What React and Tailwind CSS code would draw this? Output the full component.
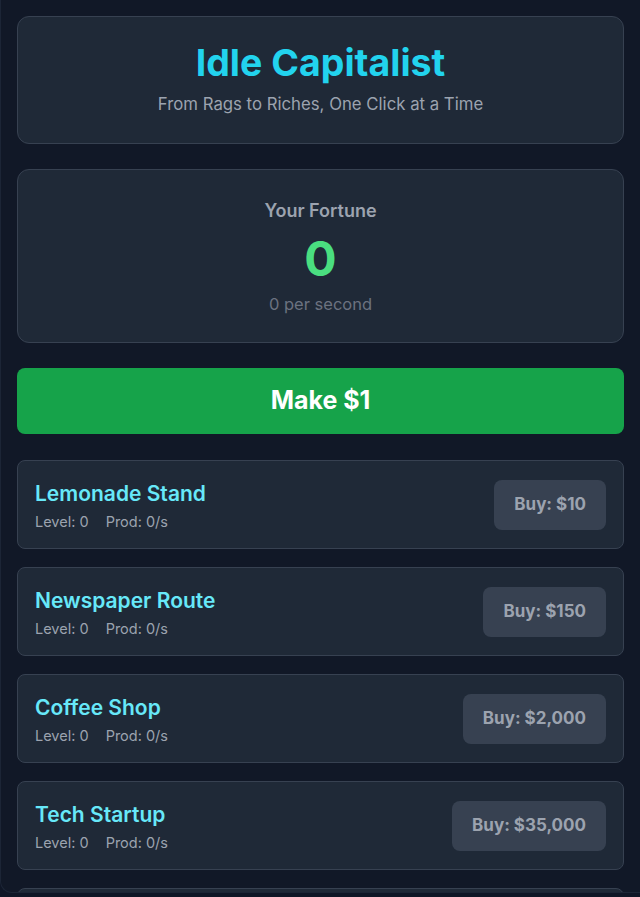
import React, { useState, useEffect } from "react";

const BUSINESSES = [
  { name: "Lemonade Stand", cost: 10, prod: 1 },
  { name: "Newspaper Route", cost: 150, prod: 8 },
  { name: "Coffee Shop", cost: 2000, prod: 60 },
  { name: "Tech Startup", cost: 35000, prod: 500 },
  { name: "Real Estate Empire", cost: 500000, prod: 4000 },
];

const fmt = (n) => Math.floor(n).toLocaleString("en-US");

function Business({ biz, level, money, onBuy }) {
  const cost = Math.floor(biz.cost * Math.pow(1.15, level));
  const canBuy = money >= cost;
  return (
    <div className="flex h-[89px] shrink-0 items-center justify-between rounded-lg border border-[#374151] bg-[#1f2937] px-[17px]">
      <div className="pt-[3px]">
        <h3 className="text-[21px] font-semibold leading-7 text-[#67e8f9]">{biz.name}</h3>
        <div className="mt-[4px] flex gap-[17px] text-[14.5px] leading-5 text-[#9ca3af]">
          <span>Level: {level}</span>
          <span>Prod: {fmt(level * biz.prod)}/s</span>
        </div>
      </div>
      <button
        onClick={onBuy}
        disabled={!canBuy}
        className={
          canBuy
            ? "h-[50px] rounded-lg bg-[#0891b2] px-5 text-[17px] font-bold text-white"
            : "h-[50px] cursor-not-allowed rounded-lg bg-[#374151] px-5 text-[17px] font-bold text-[#9ca3af]"
        }
      >
        Buy: ${fmt(cost)}
      </button>
    </div>
  );
}

export default function App() {
  const [money, setMoney] = useState(0);
  const [levels, setLevels] = useState(BUSINESSES.map(() => 0));

  const perSecond = BUSINESSES.reduce((sum, b, i) => sum + b.prod * levels[i], 0);

  useEffect(() => {
    if (perSecond === 0) return;
    const id = setInterval(() => setMoney((m) => m + perSecond / 10), 100);
    return () => clearInterval(id);
  }, [perSecond]);

  const buy = (i) => {
    const cost = Math.floor(BUSINESSES[i].cost * Math.pow(1.15, levels[i]));
    if (money < cost) return;
    setMoney((m) => m - cost);
    setLevels((ls) => ls.map((l, j) => (j === i ? l + 1 : l)));
  };

  return (
    <div className="min-h-screen bg-[#0f1626] font-['Inter',sans-serif]">
      <div className="flex h-[893px] flex-col overflow-hidden rounded-bl-xl border-b border-l border-[#1c2536] bg-[#111827] px-4 pt-4">
        <div className="h-[128px] shrink-0 rounded-xl border border-[#374151] bg-[#1f2937] pt-[26px] text-center">
          <h1 className="text-[37.5px] font-bold leading-10 text-[#22d3ee]">Idle Capitalist</h1>
          <p className="mt-[9px] text-[16.75px] leading-6 text-[#9ca3af]">From Rags to Riches, One Click at a Time</p>
        </div>

        <div className="mt-[25px] h-[174px] shrink-0 rounded-xl border border-[#374151] bg-[#1f2937] pt-[27px] text-center">
          <h2 className="text-lg font-semibold leading-7 text-[#9ca3af]">Your Fortune</h2>
          <div className="mt-[10px] text-5xl font-bold leading-none text-[#4ade80]">{fmt(money)}</div>
          <p className="mt-[9px] text-[16.5px] leading-6 text-[#6b7280]">{fmt(perSecond)} per second</p>
        </div>

        <button
          onClick={() => setMoney((m) => m + 1)}
          className="mt-[25px] h-[66px] shrink-0 rounded-lg bg-[#16a34a] text-[25px] font-bold text-white hover:bg-[#22c55e]"
        >
          Make $1
        </button>

        <div className="mt-[26px] flex flex-col gap-[18px]">
          {BUSINESSES.map((b, i) => (
            <Business key={b.name} biz={b} level={levels[i]} money={money} onBuy={() => buy(i)} />
          ))}
        </div>
      </div>
    </div>
  );
}
